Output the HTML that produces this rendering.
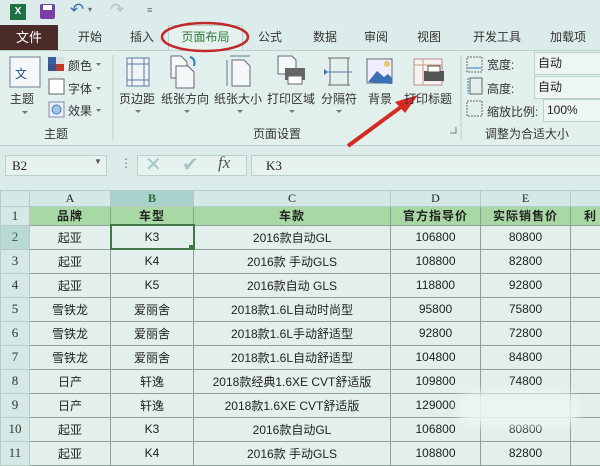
<!DOCTYPE html>
<html><head><meta charset="utf-8"><style>
*{margin:0;padding:0;box-sizing:border-box}
body{width:600px;height:450px;overflow:hidden;background:#dcecea;font-family:"Liberation Sans","Noto Sans CJK SC",sans-serif;position:relative;font-size:12px;color:#222}
.a{position:absolute;white-space:nowrap}
.tab{position:absolute;top:26px;height:24px;line-height:22px;font-size:12px;color:#333;text-align:center}
.lbl{font-size:12px;color:#333}
.dd{position:absolute;background:#eef6f4;border:1px solid #b9cfca}
table{position:absolute;left:0;top:190px;border-collapse:collapse;table-layout:fixed;width:610px}
td{height:24px;border:1px solid #8f9f9b;text-align:center;font-size:12px;background:#e3efec;color:#222;padding:0;overflow:hidden;white-space:nowrap}
td.h{background:#d4e8e5;border-color:#b7cbc6;color:#333;font-family:"Liberation Serif","Noto Serif CJK SC",serif;font-size:13px}
tr.ch td{height:16px;background:#d4e8e5;border-color:#b7cbc6;font-family:"Liberation Serif",serif;font-size:12px}
tr.r1 td{height:18px;background:#a8d9a4;font-weight:bold;letter-spacing:1px}
tr.r1 td.h{background:#d4e8e5;font-weight:normal;letter-spacing:0}
</style></head><body>
<div class="a" style="left:10px;top:4px;width:16px;height:16px;background:#1e7145;color:#fff;font-size:10px;font-weight:bold;line-height:16px;text-align:center">X</div>
<div class="a" style="left:40px;top:4px;width:15px;height:15px;background:#7b3ea6;border-radius:2px"></div>
<div class="a" style="left:43px;top:5px;width:9px;height:5px;background:#fff"></div>
<div class="a" style="left:70px;top:0px;font-size:17px;color:#3a6fb6">↶</div>
<div class="a" style="left:88px;top:5px;font-size:8px;color:#666">▾</div>
<div class="a" style="left:110px;top:0px;font-size:17px;color:#a9c4cf">↷</div>
<div class="a" style="left:147px;top:5px;font-size:9px;color:#666">≡</div>
<div class="a" style="left:0;top:25px;width:58px;height:25px;background:#4a2b28;color:#fff;line-height:25px;text-align:center;font-size:13px">文件</div>
<div class="tab" style="left:70px;width:40px">开始</div>
<div class="tab" style="left:122px;width:40px">插入</div>
<div class="a" style="left:168px;top:25px;width:75px;height:26px;background:#e4f1ee;border:1px solid #b9cfca;border-bottom:none"></div>
<div class="tab" style="left:168px;width:75px;color:#2f7a3a">页面布局</div>
<div class="tab" style="left:250px;width:40px">公式</div>
<div class="tab" style="left:305px;width:40px">数据</div>
<div class="tab" style="left:356px;width:40px">审阅</div>
<div class="tab" style="left:409px;width:40px">视图</div>
<div class="tab" style="left:467px;width:60px">开发工具</div>
<div class="tab" style="left:543px;width:50px">加载项</div>
<div class="a" style="left:0;top:50px;width:600px;height:96px;background:#e2f0ed;border-top:1px solid #b9cfca;border-bottom:1px solid #b9cfca"></div>
<svg class="a" style="left:0;top:0" width="600" height="450">
<ellipse cx="205" cy="37" rx="43" ry="14" fill="none" stroke="#c0282a" stroke-width="2.5"/>
<rect x="10" y="57" width="30" height="30" fill="#f4f8f8" stroke="#6a7f9a"/>
<text x="15" y="78" font-size="12" fill="#2a4a8a" font-family="Noto Sans CJK SC">文</text>
<rect x="48" y="57" width="8" height="7" fill="#3a5f9e"/><rect x="56" y="57" width="8" height="7" fill="#ddd"/><rect x="48" y="64" width="8" height="7" fill="#3a4f8e"/><rect x="56" y="64" width="8" height="7" fill="#c0392b"/>
<rect x="49" y="79" width="15" height="15" fill="#fff" stroke="#666"/>
<rect x="49" y="102" width="15" height="15" fill="#eef" stroke="#7a8fb0"/><circle cx="56.5" cy="109.5" r="4.5" fill="#9ec8e8" stroke="#4a7aa8"/>
<line x1="113" y1="55" x2="113" y2="140" stroke="#bcd0cb"/>
<line x1="461" y1="55" x2="461" y2="140" stroke="#bcd0cb"/>
<rect x="127" y="58" width="22" height="28" fill="#eef4f8" stroke="#5a7aa0"/><line x1="132" y1="58" x2="132" y2="86" stroke="#5a7aa0"/><line x1="144" y1="58" x2="144" y2="86" stroke="#5a7aa0"/><line x1="127" y1="64" x2="149" y2="64" stroke="#5a7aa0"/><line x1="127" y1="80" x2="149" y2="80" stroke="#5a7aa0"/>
<path d="M171 56h10l6 6v16h-16z" fill="#f4f8f8" stroke="#667"/><path d="M176 66h12l6 6v16h-18z" fill="#f4f8f8" stroke="#667"/><path d="M190 57q6 2 4 9" fill="none" stroke="#2e7cc0" stroke-width="2"/>
<line x1="230" y1="56" x2="250" y2="56" stroke="#5a7aa0"/><line x1="227" y1="60" x2="227" y2="86" stroke="#5a7aa0"/><path d="M232 60h12l6 6v20h-18z" fill="#f4f8f8" stroke="#667"/>
<path d="M278 56h14l4 4v14h-18z" fill="#f4f8f8" stroke="#667"/><rect x="285" y="68" width="20" height="12" fill="#666"/><rect x="288" y="76" width="14" height="8" fill="#fff" stroke="#666"/>
<line x1="328" y1="58" x2="350" y2="58" stroke="#666"/><line x1="328" y1="85" x2="350" y2="85" stroke="#666"/><line x1="330" y1="58" x2="330" y2="85" stroke="#666"/><line x1="348" y1="58" x2="348" y2="85" stroke="#666"/><line x1="326" y1="72" x2="352" y2="72" stroke="#5a7aa0"/><path d="M324 69l4 3-4 3z" fill="#2e7cc0"/>
<rect x="367" y="59" width="25" height="24" fill="#eef" stroke="#667"/><path d="M368 82l9-11 7 6 4-3 4 4v6z" fill="#3a6fb6"/><circle cx="387" cy="64" r="3" fill="#e6c76a"/>
<rect x="414" y="59" width="28" height="26" fill="#f6f2f0" stroke="#bb8a8a"/><line x1="414" y1="65" x2="442" y2="65" stroke="#c98"/><line x1="423" y1="59" x2="423" y2="85" stroke="#c98"/><rect x="424" y="71" width="20" height="10" fill="#555"/><rect x="428" y="66" width="12" height="6" fill="#fff" stroke="#555"/>
<g fill="#777"><path d="M22 111h6l-3 3z"/><path d="M135 110h6l-3 3z"/><path d="M184 110h6l-3 3z"/><path d="M237 110h6l-3 3z"/><path d="M289 110h6l-3 3z"/><path d="M336 110h6l-3 3z"/><path d="M96 63h5l-2.5 3z"/><path d="M96 87h5l-2.5 3z"/><path d="M96 109h5l-2.5 3z"/></g>
<rect x="467" y="57" width="15" height="15" fill="none" stroke="#666" stroke-dasharray="2 1"/><path d="M468 68h13" stroke="#2e7cc0"/>
<rect x="470" y="78" width="12" height="16" fill="none" stroke="#666"/><path d="M468 78v16" stroke="#2e7cc0" stroke-dasharray="2 1"/>
<rect x="467" y="101" width="15" height="15" fill="none" stroke="#666" stroke-dasharray="2 1"/>
<path d="M450 133h6v-6" fill="none" stroke="#777"/>
<path d="M348 146L405 104" stroke="#d42a22" stroke-width="4"/>
<path d="M418 95L395 102L405 113z" fill="#d42a22"/>
</svg>
<div class="a lbl" style="left:10px;top:90px">主题</div>
<div class="a lbl" style="left:68px;top:57px">颜色</div>
<div class="a lbl" style="left:68px;top:80px">字体</div>
<div class="a lbl" style="left:68px;top:102px">效果</div>
<div class="a lbl" style="left:119px;top:90px">页边距</div>
<div class="a lbl" style="left:161px;top:90px">纸张方向</div>
<div class="a lbl" style="left:214px;top:90px">纸张大小</div>
<div class="a lbl" style="left:267px;top:90px">打印区域</div>
<div class="a lbl" style="left:321px;top:90px">分隔符</div>
<div class="a lbl" style="left:368px;top:90px">背景</div>
<div class="a lbl" style="left:404px;top:90px">打印标题</div>
<div class="a lbl" style="left:44px;top:125px">主题</div>
<div class="a lbl" style="left:253px;top:125px">页面设置</div>
<div class="a lbl" style="left:485px;top:125px">调整为合适大小</div>
<div class="a lbl" style="left:487px;top:56px">宽度:</div>
<div class="a lbl" style="left:487px;top:80px">高度:</div>
<div class="a lbl" style="left:487px;top:103px">缩放比例:</div>
<div class="dd" style="left:534px;top:52px;width:70px;height:23px;line-height:21px;padding-left:3px">自动</div>
<div class="dd" style="left:534px;top:76px;width:70px;height:23px;line-height:21px;padding-left:3px">自动</div>
<div class="dd" style="left:543px;top:99px;width:60px;height:23px;line-height:21px;padding-left:3px">100%</div>
<div class="a" style="left:5px;top:155px;width:102px;height:21px;background:#e6f2f0;border:1px solid #bcd0cb;font-family:'Liberation Serif',serif;font-size:13px;line-height:19px;padding-left:6px">B2</div>
<div class="a" style="left:94px;top:157px;font-size:8px;color:#555">▼</div>
<div class="a" style="left:120px;top:156px;color:#777">⋮</div>
<div class="a" style="left:137px;top:155px;width:110px;height:21px;background:#e6f2f0;border:1px solid #bcd0cb"></div>
<div class="a" style="left:145px;top:152px;font-size:20px;color:#a6c6c4">✕</div>
<div class="a" style="left:182px;top:152px;font-size:20px;color:#a6c6c4">✔</div>
<div class="a" style="left:218px;top:153px;font-size:17px;font-style:italic;font-family:'Liberation Serif',serif;color:#555">fx</div>
<div class="a" style="left:251px;top:155px;width:360px;height:21px;background:#e6f2f0;border:1px solid #bcd0cb;font-family:'Liberation Serif',serif;font-size:13px;line-height:19px;padding-left:14px">K3</div>
<table>
<colgroup><col style="width:29px"><col style="width:81px"><col style="width:83px"><col style="width:197px"><col style="width:90px"><col style="width:90px"><col style="width:40px"></colgroup>
<tr class="ch"><td class="h"></td><td>A</td><td style="background:#a9d2cc;color:#2f6a3a;font-weight:bold">B</td><td>C</td><td>D</td><td>E</td><td></td></tr>
<tr class="r1"><td class="h">1</td><td>品牌</td><td>车型</td><td>车款</td><td>官方指导价</td><td>实际销售价</td><td>利</td></tr>
<tr><td class="h" style="background:#b9d9d4;color:#2f6a3a">2</td><td>起亚</td><td style="border:2px solid #3f7a43">K3</td><td>2016款自动GL</td><td>106800</td><td>80800</td><td></td></tr>
<tr><td class="h">3</td><td>起亚</td><td>K4</td><td>2016款  手动GLS</td><td>108800</td><td>82800</td><td></td></tr>
<tr><td class="h">4</td><td>起亚</td><td>K5</td><td>2016款自动 GLS</td><td>118800</td><td>92800</td><td></td></tr>
<tr><td class="h">5</td><td>雪铁龙</td><td>爱丽舍</td><td>2018款1.6L自动时尚型</td><td>95800</td><td>75800</td><td></td></tr>
<tr><td class="h">6</td><td>雪铁龙</td><td>爱丽舍</td><td>2018款1.6L手动舒适型</td><td>92800</td><td>72800</td><td></td></tr>
<tr><td class="h">7</td><td>雪铁龙</td><td>爱丽舍</td><td>2018款1.6L自动舒适型</td><td>104800</td><td>84800</td><td></td></tr>
<tr><td class="h">8</td><td>日产</td><td>轩逸</td><td>2018款经典1.6XE CVT舒适版</td><td>109800</td><td>74800</td><td></td></tr>
<tr><td class="h">9</td><td>日产</td><td>轩逸</td><td>2018款1.6XE CVT舒适版</td><td>129000</td><td></td><td></td></tr>
<tr><td class="h">10</td><td>起亚</td><td>K3</td><td>2016款自动GL</td><td>106800</td><td>80800</td><td></td></tr>
<tr><td class="h">11</td><td>起亚</td><td>K4</td><td>2016款 手动GLS</td><td>108800</td><td>82800</td><td></td></tr>
</table>
<div class="a" style="left:458px;top:392px;width:120px;height:34px;background:#eef5f3;border-radius:16px;filter:blur(5px);opacity:.9"></div>
<div class="a" style="left:189px;top:245px;width:5px;height:5px;background:#3f7a43"></div>
</body></html>
